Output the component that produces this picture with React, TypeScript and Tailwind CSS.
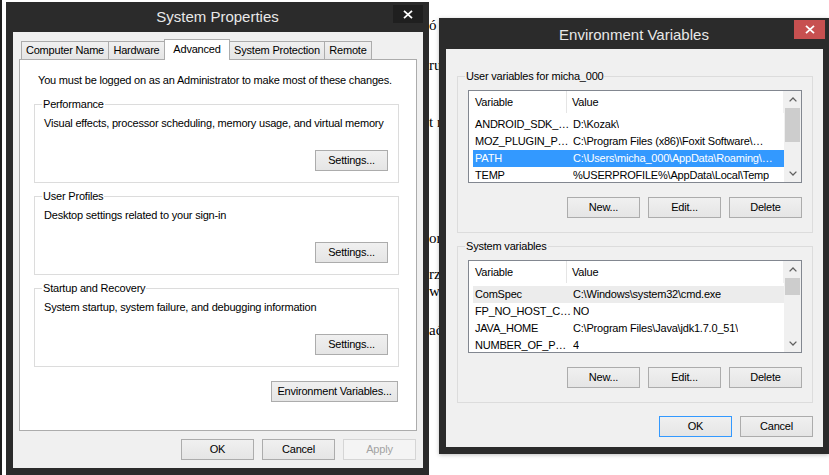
import type { ReactNode } from 'react'

const UI = "font-['Liberation_Sans',Arial,sans-serif] text-[11px] tracking-[-0.2px] text-black"

function Btn({
  children,
  className = '',
  disabled = false,
  primary = false,
}: {
  children: ReactNode
  className?: string
  disabled?: boolean
  primary?: boolean
}) {
  const tone = disabled
    ? 'border-[#d5d5d5] bg-[#f4f4f4] text-[#a3a3a3]'
    : primary
      ? 'border-[#3399ff] bg-linear-to-b from-[#f0f0f0] to-[#e5e5e5] text-black'
      : 'border-[#acacac] bg-linear-to-b from-[#f0f0f0] to-[#e5e5e5] text-black'
  return (
    <div className={`flex h-[21px] w-[73px] shrink-0 items-center justify-center border leading-none ${tone} ${className}`}>
      {children}
    </div>
  )
}

function CloseX({ className = '' }: { className?: string }) {
  return (
    <svg className={className} width="10" height="9" viewBox="0 0 10 9" fill="none" stroke="currentColor" strokeWidth="1.8">
      <path d="M1 0.8 L9 8.2 M9 0.8 L1 8.2" />
    </svg>
  )
}

function Chevron({ up }: { up?: boolean }) {
  return (
    <svg width="8" height="5" viewBox="0 0 8 5" fill="none" stroke="#606060" strokeWidth="1.3">
      <path d={up ? 'M0.6 4.4 L4 1 L7.4 4.4' : 'M0.6 0.6 L4 4 L7.4 0.6'} />
    </svg>
  )
}

function GroupBox({ title, children, className = '' }: { title: string; children: ReactNode; className?: string }) {
  return (
    <fieldset className={`min-w-0 border border-[#dcdcdc] ${className}`}>
      <legend className="-ml-[2px] px-[1px] leading-[16px]">{title}</legend>
      {children}
    </fieldset>
  )
}

function Section({ title, text }: { title: string; text: string }) {
  return (
    <GroupBox title={title} className="flex flex-col pl-[9px] pr-[10px] pb-[11px]">
      <div className="mt-[3px] whitespace-nowrap leading-[16px]">{text}</div>
      <div className="mt-[19px] flex justify-end">
        <Btn>Settings...</Btn>
      </div>
    </GroupBox>
  )
}

type Row = { name: string; value: string; state?: 'selected' | 'hover' }

function VarList({ rows, thumbH }: { rows: Row[]; thumbH: number }) {
  return (
    <div className="flex h-[93px] overflow-hidden border border-[#828790] bg-white">
      <div className="flex min-w-0 flex-1 flex-col">
        <div className="flex h-[22px] shrink-0">
          <div className="flex w-[98px] items-center border-r border-[#e5e5e5] pl-[6px]">Variable</div>
          <div className="flex flex-1 items-center border-r border-[#f0f0f0] pl-[5px]">Value</div>
        </div>
        <div className="pl-[4px] pt-[3px]">
          {rows.map((r) => (
            <div
              key={r.name}
              className={[
                'flex h-[17px] items-center whitespace-nowrap',
                r.state === 'selected' ? 'bg-[#3399ff] text-white' : '',
                r.state === 'hover' ? 'bg-[#ececec]' : '',
              ].join(' ')}
            >
              <div className="w-[100px] shrink-0 overflow-hidden pl-[2px]">{r.name}</div>
              <div className="overflow-hidden">{r.value}</div>
            </div>
          ))}
        </div>
      </div>
      <div className="flex w-[17px] shrink-0 flex-col bg-[#f0f0f0]">
        <div className="flex h-[17px] shrink-0 items-center justify-center">
          <Chevron up />
        </div>
        <div className="mx-[1px] shrink-0 bg-[#cdcdcd]" style={{ height: thumbH }} />
        <div className="flex-1" />
        <div className="flex h-[17px] shrink-0 items-center justify-center">
          <Chevron />
        </div>
      </div>
    </div>
  )
}

function VarGroup({ title, rows, thumbH, className = '' }: { title: string; rows: Row[]; thumbH: number; className?: string }) {
  return (
    <fieldset className={`min-w-0 border border-[#dcdcdc] pl-[10px] pr-[10px] pb-[14px] ${className}`}>
      <legend className="-ml-[3px] px-[1px] leading-[16px]">{title}</legend>
      <div className="mt-[6px]">
        <VarList rows={rows} thumbH={thumbH} />
      </div>
      <div className="mt-[14px] flex justify-end gap-[8px]">
        <Btn>New...</Btn>
        <Btn>Edit...</Btn>
        <Btn>Delete</Btn>
      </div>
    </fieldset>
  )
}

const userRows: Row[] = [
  { name: 'ANDROID_SDK_…', value: 'D:\\Kozak\\' },
  { name: 'MOZ_PLUGIN_P…', value: 'C:\\Program Files (x86)\\Foxit Software\\…' },
  { name: 'PATH', value: 'C:\\Users\\micha_000\\AppData\\Roaming\\…', state: 'selected' },
  { name: 'TEMP', value: '%USERPROFILE%\\AppData\\Local\\Temp' },
]

const systemRows: Row[] = [
  { name: 'ComSpec', value: 'C:\\Windows\\system32\\cmd.exe', state: 'hover' },
  { name: 'FP_NO_HOST_C…', value: 'NO' },
  { name: 'JAVA_HOME', value: 'C:\\Program Files\\Java\\jdk1.7.0_51\\' },
  { name: 'NUMBER_OF_P…', value: '4' },
]

const tabs = [
  { label: 'Computer Name', w: 'w-[88px]' },
  { label: 'Hardware', w: 'w-[57px]' },
  { label: 'Advanced', w: 'w-[66px]', active: true },
  { label: 'System Protection', w: 'w-[96px]' },
  { label: 'Remote', w: 'w-[48px]' },
]

function SystemProperties() {
  return (
    <div className={`absolute left-[6px] top-[2px] flex h-[473px] w-[423px] flex-col bg-[#2b2b2b] ${UI}`}>
      <div className="grid h-[30px] shrink-0 grid-cols-[1fr_auto_1fr] items-start">
        <div />
        <div className="mt-[6px] text-[15px] leading-[18px] tracking-normal text-[#e8e8e8]">System Properties</div>
        <div className="flex justify-end pr-[6px] pt-[3px]">
          <div className="flex h-[18px] w-[30px] items-center justify-center bg-[#1f1f1f] text-white">
            <CloseX />
          </div>
        </div>
      </div>
      <div className="mb-[7px] ml-[7px] mr-[6px] flex flex-1 flex-col bg-[#f0f0f0] px-[6px] pt-[7px]">
        <div className="relative z-10 flex h-[20px] items-end pl-[2px]">
          {tabs.map((t, i) =>
            t.active ? (
              <div
                key={t.label}
                className={`${t.w} -mb-px -ml-px flex h-[21px] items-start justify-center border border-b-0 border-[#acacac] bg-white pt-[3px] leading-[13px]`}
              >
                {t.label}
              </div>
            ) : (
              <div
                key={t.label}
                className={`${t.w} ${i === 0 ? '' : '-ml-px'} flex h-[18px] items-center justify-center whitespace-nowrap border border-b-0 border-[#acacac] bg-linear-to-b from-[#f0f0f0] to-[#e5e5e5]`}
              >
                {t.label}
              </div>
            ),
          )}
        </div>
        <div className="flex h-[372px] flex-col border border-[#acacac] bg-white pl-[14px] pr-[17px] pt-[12px]">
          <div className="whitespace-nowrap pl-[4px] leading-[16px]">
            You must be logged on as an Administrator to make most of these changes.
          </div>
          <div className="mt-[8px] flex flex-col gap-[5px]">
            <Section title="Performance" text="Visual effects, processor scheduling, memory usage, and virtual memory" />
            <Section title="User Profiles" text="Desktop settings related to your sign-in" />
            <Section title="Startup and Recovery" text="System startup, system failure, and debugging information" />
          </div>
          <div className="mt-[14px] flex justify-end pr-[1px]">
            <Btn className="w-[127px]">Environment Variables...</Btn>
          </div>
        </div>
        <div className="mt-[8px] flex justify-end gap-[8px] pr-[1px]">
          <Btn>OK</Btn>
          <Btn>Cancel</Btn>
          <Btn disabled>Apply</Btn>
        </div>
      </div>
    </div>
  )
}

function EnvironmentVariables() {
  return (
    <div className={`absolute left-[439px] top-[18px] flex h-[436px] w-[390px] flex-col bg-[#2b2b2b] shadow-[0_1px_4px_rgba(0,0,0,0.25)] ${UI}`}>
      <div className="grid h-[31px] shrink-0 grid-cols-[1fr_auto_1fr] items-start">
        <div />
        <div className="mt-[8px] text-[15px] leading-[18px] tracking-normal text-[#e8e8e8]">Environment Variables</div>
        <div className="flex justify-end pr-[4px] pt-[2px]">
          <div className="flex h-[19px] w-[31px] items-center justify-center bg-[#c75050] text-white">
            <CloseX />
          </div>
        </div>
      </div>
      <div className="mb-[7px] ml-[7px] mr-[6px] flex min-w-0 flex-1 flex-col bg-[#f0f0f0] pl-[11px] pr-[10px] pt-[19px]">
        <VarGroup title="User variables for micha_000" rows={userRows} thumbH={34} />
        <VarGroup title="System variables" rows={systemRows} thumbH={17} className="mt-[5px]" />
        <div className="mt-[13px] flex justify-end gap-[8px]">
          <Btn primary>OK</Btn>
          <Btn>Cancel</Btn>
        </div>
      </div>
    </div>
  )
}

const pageText = [
  { t: 'ó', top: 'top-[18px]' },
  { t: 'ruch', top: 'top-[58px]' },
  { t: 't r', top: 'top-[115px]' },
  { t: 'or', top: 'top-[231px]' },
  { t: 'rze', top: 'top-[267px]' },
  { t: 'wsz', top: 'top-[284px]' },
  { t: 'ać', top: 'top-[323px]' },
]

export default function App() {
  return (
    <div className="relative h-[475px] w-[829px] overflow-hidden bg-white">
      <div className="absolute left-0 top-0 h-full w-[2px] bg-[#1f1f1f]" />
      {pageText.map((p) => (
        <div
          key={p.t}
          className={`absolute left-[429px] ${p.top} font-['Liberation_Serif','Times_New_Roman',serif] text-[15px] leading-[14px] text-black`}
        >
          {p.t}
        </div>
      ))}
      <SystemProperties />
      <EnvironmentVariables />
    </div>
  )
}
